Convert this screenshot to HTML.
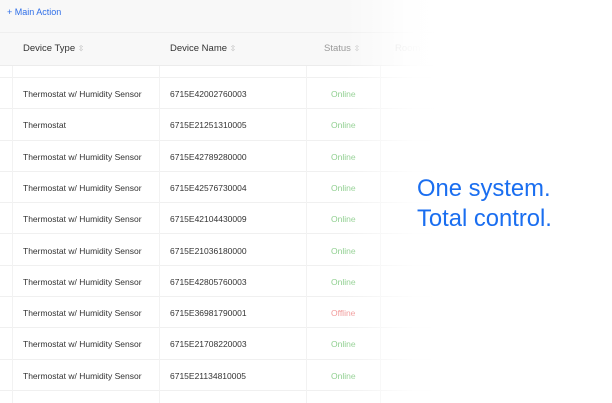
<!DOCTYPE html>
<html><head><style>
*{margin:0;padding:0;box-sizing:border-box}
body{width:612px;height:403px;overflow:hidden;background:#fff;font-family:"Liberation Sans",sans-serif;position:relative}
.hdr{position:absolute;left:0;top:0;width:612px;height:66px;background:#f8f8f8;border-bottom:1px solid #ececec}
.hl{position:absolute;left:0;top:32px;width:612px;height:1px;background:#efefef}
.ma{position:absolute;left:7px;top:7px;font-size:9px;color:#2f6fe8}
.th{position:absolute;top:43px;font-size:9.5px;color:#333}
.th span{color:#bbb;font-size:8px}
.vl{position:absolute;top:66px;height:337px;width:1px;background:#f2f2f2}
.row{position:absolute;left:0;width:612px;height:31.3px;border-bottom:1px solid #f0f0f0;font-size:8.5px;color:#333}
.row div{position:absolute;top:11px}
.on{color:#8fcf8f}.off{color:#f19a9a}
.fade{position:absolute;left:345px;top:0;width:267px;height:403px;background:linear-gradient(to right,rgba(255,255,255,0),rgba(255,255,255,.9) 25%,#fff 35%)}
.big{position:absolute;left:417px;top:174px;font-size:23.8px;line-height:30px;color:#1a6ef0}
</style></head><body>
<div class="hdr"></div><div class="hl"></div>
<div class="ma">+ Main Action</div>
<div class="th" style="left:23px">Device Type <span>⇳</span></div>
<div class="th" style="left:170px">Device Name <span>⇳</span></div>
<div class="th" style="left:324px;color:#999">Status <span>⇳</span></div>
<div class="th" style="left:395px;color:#ccc">Room</div>
<div class="row" style="top:47px"></div>
<div class="row" style="top:78px"><div style="left:23px">Thermostat w/ Humidity Sensor</div><div style="left:170px">6715E42002760003</div><div class="on" style="left:331px">Online</div></div>
<div class="row" style="top:109.3px"><div style="left:23px">Thermostat</div><div style="left:170px">6715E21251310005</div><div class="on" style="left:331px">Online</div></div>
<div class="row" style="top:140.6px"><div style="left:23px">Thermostat w/ Humidity Sensor</div><div style="left:170px">6715E42789280000</div><div class="on" style="left:331px">Online</div></div>
<div class="row" style="top:171.9px"><div style="left:23px">Thermostat w/ Humidity Sensor</div><div style="left:170px">6715E42576730004</div><div class="on" style="left:331px">Online</div></div>
<div class="row" style="top:203.2px"><div style="left:23px">Thermostat w/ Humidity Sensor</div><div style="left:170px">6715E42104430009</div><div class="on" style="left:331px">Online</div></div>
<div class="row" style="top:234.5px"><div style="left:23px">Thermostat w/ Humidity Sensor</div><div style="left:170px">6715E21036180000</div><div class="on" style="left:331px">Online</div></div>
<div class="row" style="top:265.8px"><div style="left:23px">Thermostat w/ Humidity Sensor</div><div style="left:170px">6715E42805760003</div><div class="on" style="left:331px">Online</div></div>
<div class="row" style="top:297.1px"><div style="left:23px">Thermostat w/ Humidity Sensor</div><div style="left:170px">6715E36981790001</div><div class="off" style="left:331px">Offline</div></div>
<div class="row" style="top:328.4px"><div style="left:23px">Thermostat w/ Humidity Sensor</div><div style="left:170px">6715E21708220003</div><div class="on" style="left:331px">Online</div></div>
<div class="row" style="top:359.7px"><div style="left:23px">Thermostat w/ Humidity Sensor</div><div style="left:170px">6715E21134810005</div><div class="on" style="left:331px">Online</div></div>
<div class="vl" style="left:12px"></div><div class="vl" style="left:159px"></div><div class="vl" style="left:306px"></div><div class="vl" style="left:380px"></div>
<div class="fade"></div>
<div class="big">One system.<br>Total control.</div>
</body></html>
